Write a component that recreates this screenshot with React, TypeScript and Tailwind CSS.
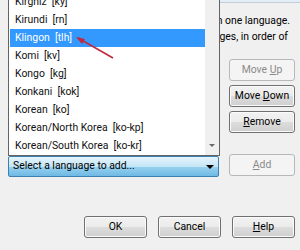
const languages = [
  'Kirghiz  [ky]',
  'Kirundi  [rn]',
  'Klingon  [tlh]',
  'Komi  [kv]',
  'Kongo  [kg]',
  'Konkani  [kok]',
  'Korean  [ko]',
  'Korean/North Korea  [ko-kp]',
  'Korean/South Korea  [ko-kr]',
]

const selected = 'Klingon  [tlh]'

function DialogButton({
  children,
  disabled,
  className = '',
}: {
  children: React.ReactNode
  disabled?: boolean
  className?: string
}) {
  const tone = disabled
    ? 'border-[#b5b9bc] bg-[#f4f4f4] text-[#8a8a8a]'
    : 'border-[#707070] bg-[linear-gradient(#f2f2f2_0%,#ebebeb_50%,#dddddd_50%,#cfcfcf_100%)] text-black shadow-[inset_0_0_0_1px_#fbfbfb]'
  return (
    <div
      className={`flex h-[22px] items-center justify-center whitespace-nowrap rounded-[3px] border ${tone} ${className}`}
    >
      {children}
    </div>
  )
}

function LanguagePopup() {
  return (
    <div className="absolute left-[8px] top-[-8px] flex h-[164px] w-[212px] border border-[#646464] bg-white">
      <ul className="flex-1 pl-[1px]">
        {languages.map((lang) => (
          <li
            key={lang}
            className={`flex h-[18px] items-center whitespace-pre pl-[5px] ${
              lang === selected ? 'bg-[#3399ff] text-white' : 'text-[#111]'
            }`}
          >
            {lang}
          </li>
        ))}
      </ul>
      <div className="relative w-[14px] bg-[#f0f0f0]">
        <span className="absolute bottom-[8px] left-[4px] h-0 w-0 border-x-[3px] border-t-[3px] border-x-transparent border-t-[#6a6a6a]" />
      </div>
    </div>
  )
}

export default function App() {
  return (
    <div
      className="relative flex h-[250px] w-[300px] flex-col overflow-hidden bg-[#f0f0f0] text-[10.4px] leading-none"
      style={{ fontFamily: 'Roboto, "Noto Sans", sans-serif' }}
    >
      <div className="flex">
        <div className="relative w-[220px] pl-[8px]">
          <div className="h-[156px]" />
          <div className="relative flex h-[21px] w-[211px] items-center rounded-[2px] border border-[#3c7fb1] bg-[linear-gradient(#e6f4fc_0%,#c4e5f6_50%,#98d1ef_51%,#6fb9e4_100%)] pl-[4px] text-black">
            Select a language to add...
            <span className="absolute right-[4px] top-[8px] h-0 w-0 border-x-[4px] border-t-[4px] border-x-transparent border-t-black" />
          </div>
          <LanguagePopup />
        </div>

        <div className="flex w-[80px] flex-col">
          <div className="h-[3px] border-b border-[#c6cdd4] bg-[#e3eef8]" />
          <div className="mt-[10px] flex justify-end whitespace-nowrap pr-[10px] leading-[16px] text-black">
            You can use more than one language.
          </div>
          <div className="flex justify-end whitespace-nowrap pr-[12px] leading-[16px] text-black">
            Add languages, in order of
          </div>
          <div className="ml-[9px] mt-[14px] flex w-[66px] flex-col gap-[4px]">
            <DialogButton disabled>
              Move&nbsp;<u>U</u>p
            </DialogButton>
            <DialogButton>
              Move&nbsp;<u>D</u>own
            </DialogButton>
            <DialogButton>
              <u>R</u>emove
            </DialogButton>
            <DialogButton disabled className="mt-[17px]">
              <u>A</u>dd
            </DialogButton>
          </div>
        </div>
      </div>

      <div className="mt-[39px] flex justify-end gap-[11px] pr-[5px]">
        <DialogButton className="w-[63px]">OK</DialogButton>
        <DialogButton className="w-[63px]">Cancel</DialogButton>
        <DialogButton className="w-[63px]">
          <u>H</u>elp
        </DialogButton>
      </div>

      <svg className="absolute left-0 top-0" width="300" height="250" viewBox="0 0 300 250">
        <line x1="113" y1="58" x2="78" y2="38" stroke="#c0283c" strokeWidth="1.5" />
        <path d="M76 37 L85 39 L82 44 Z" fill="#c0283c" />
      </svg>
    </div>
  )
}
